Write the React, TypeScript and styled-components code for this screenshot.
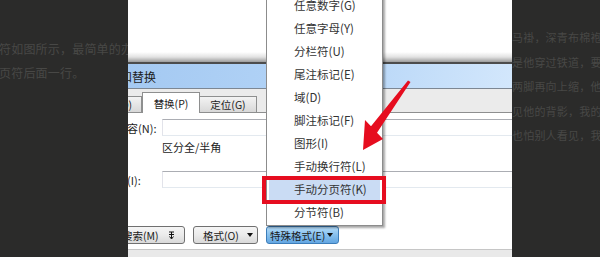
import React from "react";
import styled, { createGlobalStyle } from "styled-components";

const Global = createGlobalStyle`
  html, body { margin: 0; padding: 0; background: #2b2b2a; }
  body {
    width: 600px; height: 257px; overflow: hidden;
    font-family: "Noto Sans CJK SC", "Noto Sans", sans-serif;
  }
`;

const Frame = styled.div`
  display: flex;
  width: 600px;
  height: 257px;
  overflow: hidden;
`;

const Shade = styled.div<{ $w: number; $pt: number; $lh: number; $fs: number }>`
  flex: none;
  width: ${(p) => p.$w}px;
  box-sizing: border-box;
  padding-top: ${(p) => p.$pt}px;
  background: #2b2b2a;
  overflow: hidden;
  white-space: nowrap;
  font-size: ${(p) => p.$fs}px;
  line-height: ${(p) => p.$lh}px;
  color: #484846;
  letter-spacing: 0.2px;
`;

const ShadeLine = styled.div<{ $indent: number }>`
  margin-left: ${(p) => p.$indent}px;
`;

const Center = styled.div`
  position: relative;
  flex: none;
  width: 384px;
  display: flex;
  flex-direction: column;
  overflow: hidden;
  background: #fff;
  color: #1c1c1c;
`;

const DocArea = styled.div`
  flex: none;
  height: 62px;
  background: linear-gradient(to bottom, #fff 0, #fff 52px, #e2e2e2 57px, #9c9c9c 62px);
  border-bottom: 2px solid #4c4c4c;
`;

const TitleBar = styled.div`
  flex: none;
  height: 24px;
  display: flex;
  align-items: center;
  background: linear-gradient(100deg, #a4c9f2 0%, #b5d5f7 55%, #d3e7fc 100%);
  border-bottom: 1px solid #7d8793;
  font-size: 12px;
  white-space: nowrap;
`;

const TitleText = styled.span`
  margin-left: -32px;
`;

const TabStrip = styled.div`
  flex: none;
  height: 23px;
  display: flex;
  align-items: flex-end;
  background: #ebebeb;
  border-bottom: 1px solid #8e8f8f;
`;

const Tab = styled.div<{ $w: number; $active?: boolean; $first?: boolean }>`
  flex: none;
  box-sizing: border-box;
  width: ${(p) => p.$w}px;
  height: ${(p) => (p.$active ? 21 : 16)}px;
  margin-bottom: ${(p) => (p.$active ? -1 : 0)}px;
  margin-left: ${(p) => (p.$first ? -40 : 0)}px;
  border: 1px solid #8e8f8f;
  border-bottom: none;
  border-left-width: ${(p) => (p.$active ? 1 : 0)}px;
  background: ${(p) => (p.$active ? "#fff" : "linear-gradient(#f3f3f3, #d8d8d8)")};
  display: flex;
  align-items: center;
  justify-content: center;
  font-size: 10.5px;
  white-space: nowrap;
  z-index: ${(p) => (p.$active ? 1 : 0)};
`;

const Body = styled.div`
  flex: 1;
  display: flex;
  flex-direction: column;
  background: #fff;
  padding-top: 6px;
`;

const FieldRow = styled.div<{ $mt: number }>`
  display: flex;
  align-items: center;
  height: 17px;
  margin-top: ${(p) => p.$mt}px;
`;

const FieldLabel = styled.div`
  flex: none;
  width: 68px;
  margin-left: -34px;
  font-size: 11px;
  white-space: nowrap;
`;

const TextBox = styled.div`
  flex: 1;
  height: 17px;
  box-sizing: border-box;
  margin-right: -10px;
  border: 1px solid;
  border-color: #abadb3 #dbdfe6 #e3e9ef #e2e3ea;
  background: #fff;
`;

const OptionText = styled.div`
  margin: 3px 0 0 34px;
  height: 16px;
  line-height: 16px;
  font-size: 11px;
`;

const ButtonRow = styled.div`
  display: flex;
  gap: 8px;
  margin: 38px 0 0 -36px;
`;

const Button = styled.div<{ $w: number; $blue?: boolean; $pl: number; $pr: number }>`
  flex: none;
  box-sizing: border-box;
  width: ${(p) => p.$w}px;
  height: 18px;
  padding: 0 ${(p) => p.$pr}px 0 ${(p) => p.$pl}px;
  display: flex;
  align-items: center;
  justify-content: space-between;
  border: 1px solid ${(p) => (p.$blue ? "#3c7db9" : "#707070")};
  border-radius: 3px;
  background: ${(p) =>
    p.$blue
      ? "linear-gradient(to bottom, #b4dbf8 0%, #86c0ee 50%, #63a6e2 100%)"
      : "linear-gradient(to bottom, #f5f5f5 0%, #ebebeb 50%, #d9d9d9 100%)"};
  font-size: 10.5px;
  white-space: nowrap;
  color: #1a1a1a;
`;

const Caret = styled.span`
  width: 0;
  height: 0;
  border-left: 3px solid transparent;
  border-right: 3px solid transparent;
  border-top: 4px solid #111;
`;

const Footer = styled.div`
  flex: none;
  height: 7px;
  border-top: 1px solid #c6c6c6;
  background: #e9e9e9;
`;

const Menu = styled.div`
  position: absolute;
  left: 138px;
  top: -10px;
  width: 117px;
  box-sizing: border-box;
  padding: 2px 0;
  background: #fff;
  border: 1px solid #8c8c8c;
  box-shadow: 2px 2px 2px rgba(0, 0, 0, 0.35);
  z-index: 2;
`;

const MenuItem = styled.div<{ $active?: boolean }>`
  height: 23px;
  display: flex;
  align-items: center;
  box-sizing: border-box;
  margin: 0 ${(p) => (p.$active ? 2 : 0)}px;
  padding-left: ${(p) => (p.$active ? 25 : 27)}px;
  background: ${(p) => (p.$active ? "#cadcf4" : "transparent")};
  font-size: 11.5px;
  color: #333;
  white-space: nowrap;
`;

const RedBox = styled.div`
  position: absolute;
  left: 134px;
  top: 176px;
  width: 124px;
  height: 28px;
  box-sizing: border-box;
  border: 4px solid #e60d1f;
  z-index: 3;
`;

const ArrowLayer = styled.svg`
  position: absolute;
  left: 0;
  top: 0;
  z-index: 4;
  pointer-events: none;
`;

const menuItems = [
  "任意数字(G)",
  "任意字母(Y)",
  "分栏符(U)",
  "尾注标记(E)",
  "域(D)",
  "脚注标记(F)",
  "图形(I)",
  "手动换行符(L)",
  "手动分页符(K)",
  "分节符(B)",
];

export default function App() {
  return (
    <>
      <Global />
      <Frame>
        <Shade $w={128} $pt={37} $lh={24} $fs={12}>
          <ShadeLine $indent={-1}>符如图所示，最简单的办法</ShadeLine>
          <ShadeLine $indent={-1}>页符后面一行。</ShadeLine>
        </Shade>
        <Center>
          <DocArea />
          <TitleBar>
            <TitleText>查找和替换</TitleText>
          </TitleBar>
          <TabStrip>
            <Tab $w={54} $first>查找(D)</Tab>
            <Tab $w={58} $active>替换(P)</Tab>
            <Tab $w={57}>定位(G)</Tab>
          </TabStrip>
          <Body>
            <FieldRow $mt={0}>
              <FieldLabel>查找内容(N):</FieldLabel>
              <TextBox />
            </FieldRow>
            <OptionText>区分全/半角</OptionText>
            <FieldRow $mt={16}>
              <FieldLabel>替换为(I):</FieldLabel>
              <TextBox />
            </FieldRow>
            <ButtonRow>
              <Button $w={93} $pl={8} $pr={9}>
                <span>高级搜索(M)</span>
                <svg width="7" height="9" viewBox="0 0 7 9">
                  <path d="M1 1h5M1 3.5h5M3.5 1v6.5M1.5 5.5l2 2.5 2-2.5" stroke="#111" strokeWidth="1" fill="none" />
                </svg>
              </Button>
              <Button $w={65} $pl={9} $pr={4}>
                <span>格式(O)</span>
                <Caret />
              </Button>
              <Button $w={73} $pl={3} $pr={5} $blue>
                <span>特殊格式(E)</span>
                <Caret />
              </Button>
            </ButtonRow>
          </Body>
          <Footer />
          <Menu>
            {menuItems.map((t, i) => (
              <MenuItem key={t} $active={i === 8}>
                {t}
              </MenuItem>
            ))}
          </Menu>
          <RedBox />
          <ArrowLayer width="384" height="257" viewBox="0 0 384 257">
            <polygon
              points="280,80.5 282.5,82 249,132.7 255,139 235,150 237,120 243,126.3"
              fill="#e60d1f"
            />
          </ArrowLayer>
        </Center>
        <Shade $w={88} $pt={25} $lh={24.5} $fs={11}>
          <ShadeLine $indent={0}>马褂，深青布棉袍，</ShadeLine>
          <ShadeLine $indent={0}>是他穿过铁道，要</ShadeLine>
          <ShadeLine $indent={0}>两脚再向上缩，他</ShadeLine>
          <ShadeLine $indent={0}>见他的背影，我的</ShadeLine>
          <ShadeLine $indent={0}>也怕别人看见，我</ShadeLine>
        </Shade>
      </Frame>
    </>
  );
}
